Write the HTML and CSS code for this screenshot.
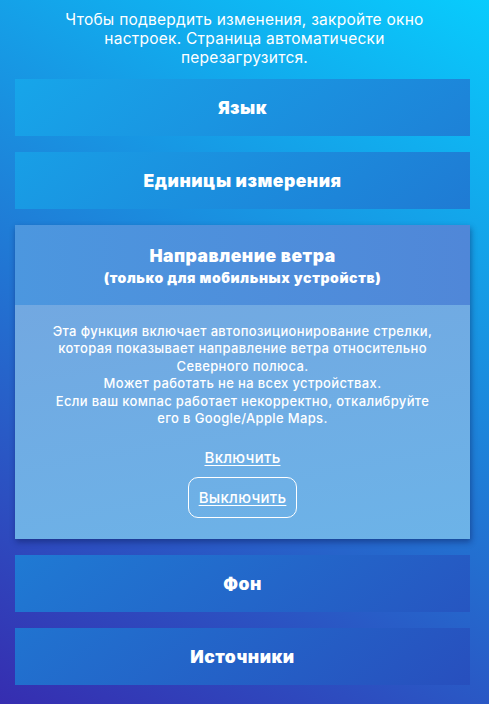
FILE: index.html
```html
<!DOCTYPE html>
<html lang="ru">
<head>
<meta charset="utf-8">
<link rel="stylesheet" href="styles.css">
</head>
<body>
<div class="page">
  <p class="intro">Чтобы подвердить изменения, закройте окно настроек. Страница автоматически перезагрузится.</p>
  <div class="list">
    <div class="card"><span class="card-title">Язык</span></div>
    <div class="card"><span class="card-title">Единицы измерения</span></div>
    <div class="card card-open">
      <div class="open-head">
        <span class="card-title">Направление ветра</span>
        <span class="card-sub">(только для мобильных устройств)</span>
      </div>
      <div class="open-body">
        <p class="desc">Эта функция включает автопозиционирование стрелки, которая показывает направление ветра относительно Северного полюса.<br>Может работать не на всех устройствах.<br>Если ваш компас работает некорректно, откалибруйте его в Google/Apple Maps.</p>
        <a class="opt" href="#">Включить</a>
        <a class="opt opt-active" href="#">Выключить</a>
      </div>
    </div>
    <div class="card"><span class="card-title">Фон</span></div>
    <div class="card"><span class="card-title">Источники</span></div>
  </div>
</div>
</body>
</html>
```

FILE: styles.css
```css
html, body {
  margin: 0;
  padding: 0;
}
body {
  min-height: 100vh;
  background: linear-gradient(28deg, rgb(54, 45, 176) 0%, rgb(8, 204, 253) 100%) fixed;
  font-family: Inter, "Noto Sans", sans-serif;
  color: #fff;
}
.page {
  display: flex;
  flex-direction: column;
  padding-top: 10px;
  padding-bottom: 20px;
}
.intro {
  margin: 0 auto;
  width: 380px;
  text-align: center;
  font-size: 15.5px;
  letter-spacing: 0.25px;
  line-height: 19px;
}
.list {
  display: flex;
  flex-direction: column;
  gap: 16px;
  padding: 0 19px 0 15px;
  margin-top: 12px;
}
.card {
  height: 57px;
  display: flex;
  align-items: center;
  justify-content: center;
  background: linear-gradient(143deg, rgb(21, 174, 238) 0%, rgb(40, 76, 188) 100%) fixed;
}
.card-title {
  font-weight: 900;
  font-size: 17.5px;
  letter-spacing: 0.5px;
}
.card-open {
  height: auto;
  flex-direction: column;
  align-items: stretch;
  box-shadow: 1px 3px 6px rgba(10, 20, 80, 0.45);
}
.open-head {
  height: 80px;
  display: flex;
  flex-direction: column;
  align-items: center;
  justify-content: center;
  gap: 3px;
  background: linear-gradient(90deg, #4c97df, #5087d8);
}
.card-sub {
  font-weight: 900;
  font-size: 14px;
  letter-spacing: 0.6px;
}
.open-body {
  display: flex;
  flex-direction: column;
  align-items: center;
  padding: 18px 20px 21px;
  background: linear-gradient(170deg, #72a8e1 0%, #6cb3e8 100%);
}
.desc {
  margin: 0;
  max-width: 392px;
  text-align: center;
  font-size: 13px;
  letter-spacing: 0.35px;
  line-height: 17.4px;
  font-weight: 500;
}
.opt {
  color: #fff;
  font-size: 15px;
  font-weight: 500;
  letter-spacing: 0.3px;
  text-decoration: underline;
  text-underline-offset: 2px;
}
.opt:first-of-type {
  margin-top: 21px;
}
.opt-active {
  margin-top: 10px;
  width: 107px;
  height: 39px;
  display: flex;
  align-items: center;
  justify-content: center;
  border: 1px solid #fff;
  border-radius: 10px;
}
```
